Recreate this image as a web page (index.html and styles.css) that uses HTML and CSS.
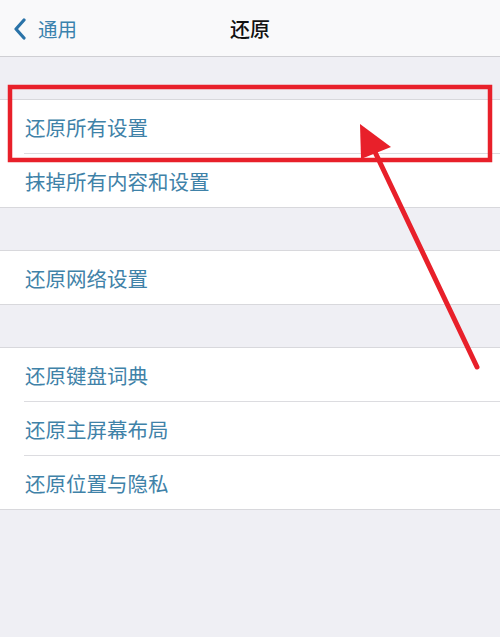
FILE: index.html
```html
<!DOCTYPE html>
<html lang="zh-CN">
<head>
    <meta charset="UTF-8">
    <meta name="viewport" content="width=device-width, initial-scale=1.0">
    <title>还原</title>
    <link rel="stylesheet" href="styles.css">
</head>
<body>
    <div class="screen">
        <!-- Barra de navegação -->
        <div class="nav-bar">
            <div class="nav-back">
                <svg class="chevron" width="14" height="22" viewBox="0 0 14 22">
                    <path d="M11 2 L3 11 L11 20" fill="none" stroke="#2a73a8" stroke-width="3.2" stroke-linecap="round" stroke-linejoin="round"/>
                </svg>
                <span>通用</span>
            </div>
            <div class="nav-title">还原</div>
        </div>

        <div class="group">
            <div class="row">还原所有设置</div>
            <div class="row">抹掉所有内容和设置</div>
        </div>

        <div class="group">
            <div class="row">还原网络设置</div>
        </div>

        <div class="group">
            <div class="row">还原键盘词典</div>
            <div class="row">还原主屏幕布局</div>
            <div class="row">还原位置与隐私</div>
        </div>

        <!-- Marcação em vermelho -->
        <svg class="markup" width="500" height="637" viewBox="0 0 500 637">
            <rect x="10" y="87" width="480" height="73" fill="none" stroke="#e8202a" stroke-width="4.5"/>
            <line x1="477" y1="367" x2="375" y2="152" stroke="#e8202a" stroke-width="5" stroke-linecap="round"/>
            <polygon points="360,124 391,147 361,159" fill="#e8202a"/>
        </svg>
    </div>
</body>
</html>
```

FILE: styles.css
```css
body {
    margin: 0;
    padding: 0;
    background-color: #efeff4;
    font-family: "Noto Sans CJK SC", "Noto Sans", sans-serif;
}

.screen {
    position: relative;
    width: 500px;
    min-height: 637px;
    background-color: #efeff4;
    overflow: hidden;
}

.nav-bar {
    height: 57px;
    background-color: #f9f9fa;
    border-bottom: 1px solid #cfcfd3;
    box-sizing: border-box;
    display: flex;
    align-items: center;
    justify-content: center;
    position: relative;
}

.nav-back {
    position: absolute;
    left: 13px;
    top: 0;
    height: 57px;
    display: flex;
    align-items: center;
    gap: 11px;
    color: #3a82ad;
    font-size: 19.5px;
}

.nav-title {
    font-size: 20px;
    color: #111;
    font-weight: 500;
}

.group {
    margin-top: 42px;
    background-color: #fff;
    border-top: 1px solid #d8d8dc;
    border-bottom: 1px solid #d8d8dc;
}

.row {
    height: 53px;
    display: flex;
    align-items: center;
    padding-left: 25px;
    font-size: 20.5px;
    color: #3f82a8;
}

.row + .row {
    border-top: 1px solid #dcdce0;
    margin-left: 24px;
    padding-left: 1px;
}

.markup {
    position: absolute;
    left: 0;
    top: 0;
    pointer-events: none;
}
```
